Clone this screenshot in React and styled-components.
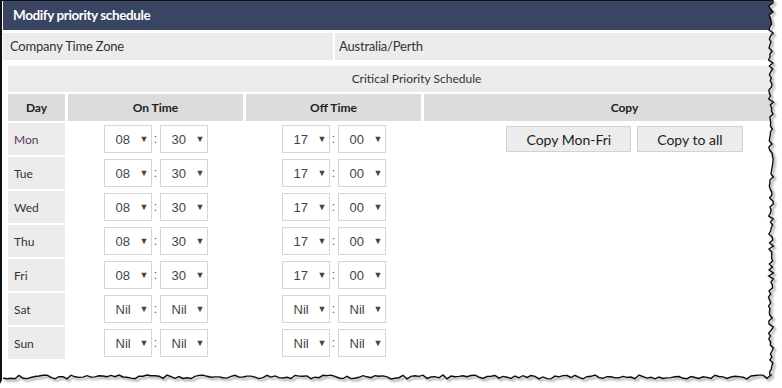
import styled, { createGlobalStyle } from 'styled-components';

const GlobalStyle = createGlobalStyle`
    body {
        margin: 0;
        background: #fff;
        font-family: Lato, "Open Sans", sans-serif;
    }
`

const days = ['Mon', 'Tue', 'Wed', 'Thu', 'Fri', 'Sat', 'Sun'];

// deterministic "torn paper" edge
const makeEdge = () => {
    let s = 17;
    const rnd = () => {
        s = (s * 9301 + 49297) % 233280;
        return s / 233280;
    };
    const pts = [];
    for (let y = 0; y <= 377; y += 3) {
        pts.push([771 + (rnd() - 0.5) * 5, y]);
    }
    for (let x = 771; x >= 0; x -= 4) {
        pts.push([x, 377 + (rnd() - 0.5) * 4]);
    }
    return pts;
};

const edge = makeEdge();
const edgeLine = edge.map(p => p[0].toFixed(1) + ',' + p[1].toFixed(1)).join(' ');
const cover = edgeLine + ' -2,388 782,388 782,-2 771,-2';

const TimeSelect = (props) => {
    return (
        <SelectBox>
            <Value>{props.value}</Value>
            <Arrow>▼</Arrow>
        </SelectBox>
    );
}

const TimePair = (props) => {
    return (
        <Pair>
            <TimeSelect value={props.hour} />
            <Colon>:</Colon>
            <TimeSelect value={props.minute} />
        </Pair>
    );
}

const App = () => {
    return (
        <Frame>
            <GlobalStyle />
            <Panel>
                <TitleBar>Modify priority schedule</TitleBar>

                <ZoneRow>
                    <ZoneCell $pad={7}>Company Time Zone</ZoneCell>
                    <ZoneCell $pad={4}>Australia/Perth</ZoneCell>
                </ZoneRow>

                <Section>
                    <Caption>Critical Priority Schedule</Caption>

                    <Table>
                        <HeadCell>Day</HeadCell>
                        <HeadCell>On Time</HeadCell>
                        <HeadCell>Off Time</HeadCell>
                        <HeadCell>Copy</HeadCell>

                        {days.map((day, i) => {
                            const nil = day === 'Sat' || day === 'Sun';
                            return [
                                <DayCell key={day + 'd'} $active={i === 0}>{day}</DayCell>,
                                <TimeCell key={day + 'on'}>
                                    <TimePair hour={nil ? 'Nil' : '08'} minute={nil ? 'Nil' : '30'} />
                                </TimeCell>,
                                <TimeCell key={day + 'off'}>
                                    <TimePair hour={nil ? 'Nil' : '17'} minute={nil ? 'Nil' : '00'} />
                                </TimeCell>,
                                <CopyCell key={day + 'c'}>
                                    {i === 0 && (
                                        <>
                                            <CopyButton>Copy Mon-Fri</CopyButton>
                                            <CopyButton>Copy to all</CopyButton>
                                        </>
                                    )}
                                </CopyCell>
                            ];
                        })}
                    </Table>
                </Section>
            </Panel>

            <TornEdge viewBox="0 0 782 388" width="782" height="388">
                <defs>
                    <filter id="tornShadow" x="-5%" y="-5%" width="110%" height="110%">
                        <feDropShadow dx="2" dy="2" stdDeviation="1.2" floodColor="#000" floodOpacity="0.45" />
                    </filter>
                </defs>
                <polygon points={cover} fill="#fff" />
                <polyline points={edgeLine} fill="none" stroke="#111" strokeWidth="1.4" filter="url(#tornShadow)" />
            </TornEdge>
        </Frame>
    );
}

const Frame = styled.div`
    position: relative;
    width: 782px;
    height: 388px;
    overflow: hidden;
    background: #fff;
`

const Panel = styled.div`
    width: 830px;
    height: 386px;
    border-left: 2px solid #111;
    border-top: 1px solid #111;
    padding-left: 1px;
    box-sizing: border-box;
`

const TitleBar = styled.div`
    height: 29px;
    background: #3a4463;
    color: #fff;
    font-weight: bold;
    font-size: 13.5px;
    line-height: 29px;
    padding-left: 10px;
    letter-spacing: -0.4px;
`

const ZoneRow = styled.div`
    display: grid;
    grid-template-columns: 330px 1fr;
    gap: 2px;
    margin-top: 3px;
`

const ZoneCell = styled.div`
    height: 27px;
    line-height: 27px;
    background: #ececec;
    color: #333;
    font-size: 13px;
    padding-left: ${props => props.$pad}px;
    letter-spacing: -0.2px;
`

const Section = styled.div`
    padding: 6px 0 0 5px;
    width: 817px;
`

const Caption = styled.div`
    height: 26px;
    line-height: 26px;
    background: #ececec;
    color: #333;
    font-size: 12px;
    text-align: center;
    margin-bottom: 2px;
`

const Table = styled.div`
    display: grid;
    grid-template-columns: 57px 175px 175px 1fr;
    grid-template-rows: 27px;
    grid-auto-rows: 32px;
    column-gap: 3px;
    row-gap: 2px;
`

const HeadCell = styled.div`
    background: #dcdcdc;
    color: #222;
    font-weight: bold;
    font-size: 12px;
    display: flex;
    align-items: center;
    justify-content: center;
`

const DayCell = styled.div`
    background: #ececec;
    color: ${props => props.$active ? '#5a3560' : '#333'};
    font-size: 12px;
    display: flex;
    align-items: center;
    padding-left: 6px;
`

const TimeCell = styled.div`
    display: flex;
    align-items: center;
    justify-content: center;
`

const CopyCell = styled.div`
    display: flex;
    align-items: center;
    justify-content: center;
    gap: 6px;
`

const Pair = styled.div`
    display: flex;
    align-items: center;
    gap: 2px;
`

const Colon = styled.span`
    font-family: "Liberation Sans", Arial, sans-serif;
    font-size: 12px;
    color: #555;
    width: 4px;
    text-align: center;
`

const SelectBox = styled.div`
    width: 48px;
    height: 28px;
    box-sizing: border-box;
    border: 1px solid #d6d6d6;
    background: #fff;
    display: flex;
    align-items: center;
    padding-left: 11px;
    font-family: "Liberation Sans", Arial, sans-serif;
    font-size: 13px;
    color: #444;
`

const Value = styled.span`
    width: 24px;
`

const Arrow = styled.span`
    font-size: 9px;
    color: #444;
`

const CopyButton = styled.button`
    height: 26px;
    padding: 0 19px;
    background: #ececec;
    border: 1px solid #d2d2d2;
    font-family: Lato, "Open Sans", sans-serif;
    font-size: 14px;
    color: #222;
    cursor: pointer;
`

const TornEdge = styled.svg`
    position: absolute;
    left: 0;
    top: 0;
    pointer-events: none;
`

export default App;
